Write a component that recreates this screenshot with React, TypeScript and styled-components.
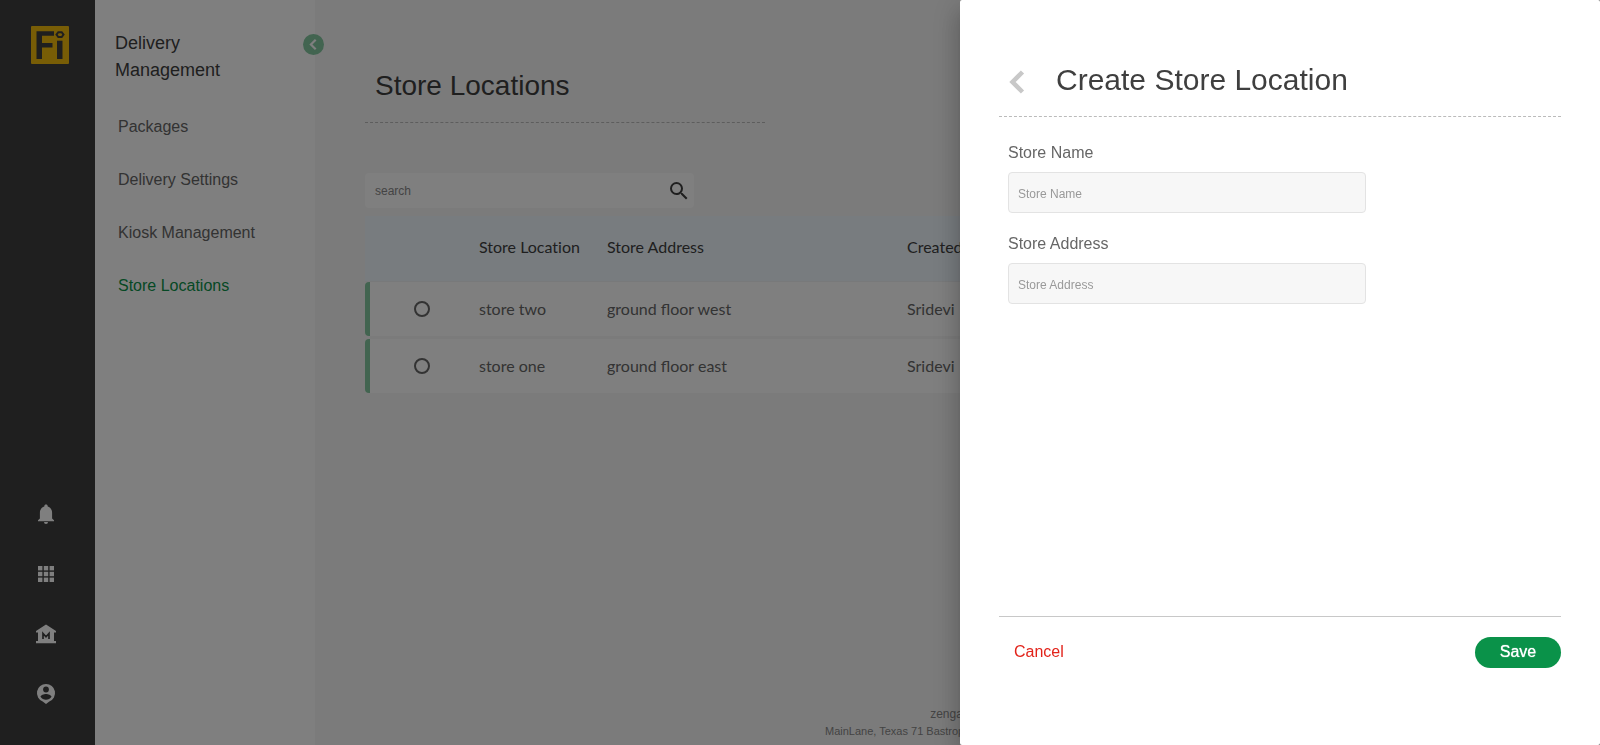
import React from "react";
import styled, { createGlobalStyle } from "styled-components";
import { MdSearch } from "react-icons/md";

const GlobalStyle = createGlobalStyle`
  *, *::before, *::after { box-sizing: border-box; }
  body {
    margin: 0;
    background: #f7f7f7;
    color: #3f3f3f;
    font-family: "Liberation Sans", Arial, sans-serif;
    font-size: 16px;
  }
  button, input { font: inherit; }
`;

const Page = styled.div`
  display: flex;
  min-height: 100vh;
`;

const Rail = styled.aside`
  width: 95px;
  flex: none;
  display: flex;
  flex-direction: column;
  justify-content: space-between;
  padding: 26px 0 39px;
  background: #3f3f3f;
`;

const LogoLink = styled.a`
  display: block;
  width: 38px;
  height: 38px;
  margin-left: 31px;
`;

const RailIcons = styled.nav`
  display: flex;
  flex-direction: column;
  gap: 36px;
  padding-left: 34px;
`;

const RailButton = styled.button`
  display: flex;
  width: 24px;
  height: 24px;
  padding: 0;
  border: 0;
  background: none;
  color: #fff;
`;

const SideNav = styled.aside`
  position: relative;
  width: 220px;
  flex: none;
  padding: 30px 20px;
  background: #fff;
`;

const SideTitle = styled.h2`
  width: 140px;
  margin: 0 0 31px;
  color: #3f3f3f;
  font-size: 18px;
  font-weight: 400;
  line-height: 27px;
`;

const CollapseButton = styled.button`
  position: absolute;
  top: 34px;
  right: -9px;
  display: flex;
  width: 21px;
  height: 21px;
  padding: 0;
  border: 0;
  border-radius: 50%;
  background: #84c8a1;
`;

const NavList = styled.ul`
  display: flex;
  flex-direction: column;
  gap: 29px;
  margin: 0;
  padding: 0 0 0 3px;
  list-style: none;
`;

const NavLink = styled.a<{ $active?: boolean }>`
  display: block;
  color: ${(p) => (p.$active ? "#0a9249" : "#666")};
  line-height: 24px;
  text-decoration: none;
`;

const Main = styled.main`
  flex: 1;
  min-width: 0;
  display: flex;
  flex-direction: column;
  padding: 65px 50px 6px;
`;

const PageTitle = styled.h1`
  width: 400px;
  margin: 0 0 50px;
  padding: 0 10px 15px;
  border-bottom: 1px dashed #bbb;
  font-size: 28px;
  font-weight: 400;
  line-height: 42px;
`;

const SearchBox = styled.form`
  display: flex;
  align-items: center;
  width: 329px;
  height: 35px;
  margin-bottom: 8px;
  padding: 0 3px 0 10px;
  border-radius: 4px;
  background: #fff;
`;

const SearchInput = styled.input`
  flex: 1;
  min-width: 0;
  padding: 0;
  border: 0;
  outline: 0;
  background: none;
  font-size: 12px;
  &::placeholder { color: #888; }
`;

const SearchButton = styled.button`
  display: flex;
  padding: 0;
  border: 0;
  background: none;
  color: #3f3f3f;
  font-size: 24px;
`;

const Table = styled.table`
  width: 100%;
  table-layout: fixed;
  border-spacing: 0;
  font-family: Lato, sans-serif;
  text-align: left;
`;

const Col = styled.col<{ $width?: number }>`
  width: ${(p) => (p.$width ? `${p.$width}px` : "auto")};
`;

const HeadCell = styled.th`
  height: 66px;
  padding: 0 5px 4px;
  border-bottom: 1px solid #f0f2f5;
  background: #f0f8ff;
  color: #3f3f3f;
  font-weight: 400;
  font-variant-ligatures: none;
`;

const Cell = styled.td`
  height: 57px;
  padding: 0 5px 2px;
  border-bottom: 3px solid #f7f7f7;
  background: #fff;
  color: #666;
`;

const SelectCell = styled(Cell)`
  padding: 0;
  background: none;
`;

const SelectArea = styled.div`
  display: flex;
  align-items: center;
  justify-content: center;
  height: 54px;
  border-left: 5px solid #84c8a1;
  border-radius: 4px 0 0 4px;
  background: #fff;
`;

const Radio = styled.input`
  appearance: none;
  width: 16px;
  height: 16px;
  margin: 0;
  border: 2px solid #666;
  border-radius: 50%;
`;

const PageFooter = styled.footer`
  margin-top: auto;
  color: #888;
  font-size: 12px;
  line-height: 18px;
  text-align: center;
`;

const FooterAddress = styled.address`
  font-size: 11px;
  font-style: normal;
  line-height: 16px;
`;

const Backdrop = styled.div`
  position: fixed;
  inset: 0;
  display: flex;
  justify-content: flex-end;
  background: rgba(0, 0, 0, 0.5);
`;

const Drawer = styled.section`
  display: flex;
  flex-direction: column;
  width: 40%;
  padding: 58px 39px 77px;
  border-radius: 2px;
  background: #fff;
  box-shadow: 0 8px 10px -5px rgba(0, 0, 0, 0.2), 0 16px 24px 2px rgba(0, 0, 0, 0.14),
    0 6px 30px 5px rgba(0, 0, 0, 0.12);
`;

const DrawerHeader = styled.header`
  display: flex;
  align-items: center;
  gap: 31px;
  padding: 0 10px 15px;
  border-bottom: 1px dashed #bbb;
`;

const BackButton = styled.button`
  display: flex;
  padding: 4px 0 0;
  border: 0;
  background: none;
`;

const DrawerTitle = styled.h2`
  margin: 0;
  color: #3f3f3f;
  font-size: 30px;
  font-weight: 400;
  line-height: 43px;
`;

const Form = styled.form`
  flex: 1;
  display: flex;
  flex-direction: column;
  padding-top: 24px;
`;

const Field = styled.div`
  display: flex;
  flex-direction: column;
  width: 358px;
  margin: 0 0 19px 9px;
`;

const Label = styled.label`
  margin-bottom: 7px;
  color: #666;
  line-height: 24px;
`;

const TextInput = styled.input`
  height: 41px;
  padding: 3px 9px 0;
  border: 1px solid #e3e3e3;
  border-radius: 4px;
  outline: 0;
  background: #f7f7f7;
  font-size: 12px;
  &::placeholder { color: #999; }
`;

const Actions = styled.div`
  display: flex;
  align-items: center;
  justify-content: space-between;
  margin-top: auto;
  padding-top: 20px;
  border-top: 1px solid #c8c8c8;
`;

const CancelButton = styled.button`
  padding: 0 15px 2px;
  border: 0;
  background: none;
  color: #e2231a;
`;

const SaveButton = styled.button`
  width: 86px;
  height: 31px;
  padding: 0 0 2px;
  border: 0;
  border-radius: 16px;
  background: #0a9249;
  color: #fff;
  text-shadow: 0 0 1px #fff;
`;

const BellIcon = () => (
  <svg width="24" height="24" viewBox="0 0 24 24" fill="currentColor" aria-hidden="true">
    <path d="M12 2.500c1 0 1.700.7 1.700 1.700v.4c2.700.8 4.400 3.200 4.400 6.100V16.500l1.900 1.700v1H4v-1l1.900-1.700v-5.800c0-2.900 1.700-5.300 4.400-6.100v-.4c0-1 .7-1.700 1.700-1.700ZM10 20h4a2 2 0 0 1-4 0Z" />
  </svg>
);

const gridStops = [4, 9.8, 15.6];

const GridIcon = () => (
  <svg width="24" height="24" viewBox="0 0 24 24" fill="currentColor" aria-hidden="true">
    {gridStops.map((y) =>
      gridStops.map((x) => <rect key={`${x}-${y}`} x={x} y={y} width="4.400" height="4.400" />)
    )}
  </svg>
);

const MuseumIcon = () => (
  <svg width="24" height="24" viewBox="0 0 24 24" aria-hidden="true">
    <path fill="currentColor" d="M12 2.500L22 9v1.500h-2V19h2v2.300H2V19h2v-8.500H2V9Z" />
    <path d="M9 17V11.500L12 14.800L15 11.500V17" fill="none" stroke="#3f3f3f" strokeWidth="1.700" />
  </svg>
);

const PersonPinIcon = () => (
  <svg width="24" height="24" viewBox="0 0 24 24" aria-hidden="true">
    <path fill="currentColor" d="M12 2a9 9 0 0 1 3.300 17.400L12 22l-3.300-2.600A9 9 0 0 1 12 2Z" />
    <circle cx="12" cy="7.500" r="2.900" fill="#3f3f3f" />
    <path fill="#3f3f3f" d="M6.500 14.800c0-1.900 3.400-2.900 5.500-2.900s5.500 1 5.500 2.900a6.600 6.600 0 0 1-11 0Z" />
  </svg>
);

const railItems = [
  { label: "Notifications", Icon: BellIcon },
  { label: "Apps", Icon: GridIcon },
  { label: "Locations", Icon: MuseumIcon },
  { label: "Profile", Icon: PersonPinIcon },
];

const navItems = ["Packages", "Delivery Settings", "Kiosk Management", "Store Locations"];

const stores = [
  { name: "store two", address: "ground floor west", createdBy: "Sridevi" },
  { name: "store one", address: "ground floor east", createdBy: "Sridevi" },
];

const fields = [
  { id: "store-name", label: "Store Name" },
  { id: "store-address", label: "Store Address" },
];

function Logo() {
  return (
    <svg width="38" height="38" viewBox="0 0 38 38" aria-hidden="true">
      <rect width="38" height="38" rx="1" fill="#f1bb0d" />
      <path d="M5.500 5.300H23V9.800H11V17H21.500V21.500H11V33H5.500Z" fill="#3f3f3f" />
      <path d="M26 14.700H31.500V33H26Z" fill="#3f3f3f" />
      <path d="M27.300 6.200H30.700L32.500 8.600L30.700 11H27.300L25.500 8.600Z" fill="none" stroke="#3f3f3f" strokeWidth="2" />
    </svg>
  );
}

export default function App() {
  return (
    <>
      <GlobalStyle />
      <Page>
        <Rail>
          <LogoLink href="#" aria-label="Home">
            <Logo />
          </LogoLink>
          <RailIcons>
            {railItems.map(({ label, Icon }) => (
              <RailButton key={label} type="button" aria-label={label}>
                <Icon />
              </RailButton>
            ))}
          </RailIcons>
        </Rail>
        <SideNav>
          <SideTitle>Delivery Management</SideTitle>
          <CollapseButton type="button" aria-label="Collapse menu">
            <svg width="21" height="21" viewBox="0 0 21 21" fill="none" stroke="#fff" strokeWidth="2.200">
              <path d="M12.700 5.700L7.900 10.500L12.700 15.300" />
            </svg>
          </CollapseButton>
          <NavList>
            {navItems.map((item) => (
              <li key={item}>
                <NavLink href="#" $active={item === "Store Locations"}>
                  {item}
                </NavLink>
              </li>
            ))}
          </NavList>
        </SideNav>
        <Main>
          <PageTitle>Store Locations</PageTitle>
          <SearchBox role="search">
            <SearchInput type="text" placeholder="search" aria-label="search" />
            <SearchButton type="button" aria-label="Search">
              <MdSearch />
            </SearchButton>
          </SearchBox>
          <Table>
            <colgroup>
              <Col $width={109} />
              <Col $width={128} />
              <Col $width={300} />
              <Col />
            </colgroup>
            <thead>
              <tr>
                <HeadCell />
                <HeadCell>Store Location</HeadCell>
                <HeadCell>Store Address</HeadCell>
                <HeadCell>Created By</HeadCell>
              </tr>
            </thead>
            <tbody>
              {stores.map((store) => (
                <tr key={store.name}>
                  <SelectCell>
                    <SelectArea>
                      <Radio type="radio" name="store" aria-label={store.name} />
                    </SelectArea>
                  </SelectCell>
                  <Cell>{store.name}</Cell>
                  <Cell>{store.address}</Cell>
                  <Cell>{store.createdBy}</Cell>
                </tr>
              ))}
            </tbody>
          </Table>
          <PageFooter>
            zengalabs
            <FooterAddress>MainLane, Texas 71 Bastrop, TX 78602, United States</FooterAddress>
          </PageFooter>
        </Main>
      </Page>
      <Backdrop>
        <Drawer role="dialog" aria-modal="true" aria-labelledby="drawer-title">
          <DrawerHeader>
            <BackButton type="button" aria-label="Back">
              <svg width="16" height="24" viewBox="0 0 16 24" fill="none" stroke="#c8c8c8" strokeWidth="4.500">
                <path d="M13.500 2L3.500 12L13.500 22" />
              </svg>
            </BackButton>
            <DrawerTitle id="drawer-title">Create Store Location</DrawerTitle>
          </DrawerHeader>
          <Form>
            {fields.map((field) => (
              <Field key={field.id}>
                <Label htmlFor={field.id}>{field.label}</Label>
                <TextInput id={field.id} type="text" placeholder={field.label} />
              </Field>
            ))}
            <Actions>
              <CancelButton type="button">Cancel</CancelButton>
              <SaveButton type="submit">Save</SaveButton>
            </Actions>
          </Form>
        </Drawer>
      </Backdrop>
    </>
  );
}
